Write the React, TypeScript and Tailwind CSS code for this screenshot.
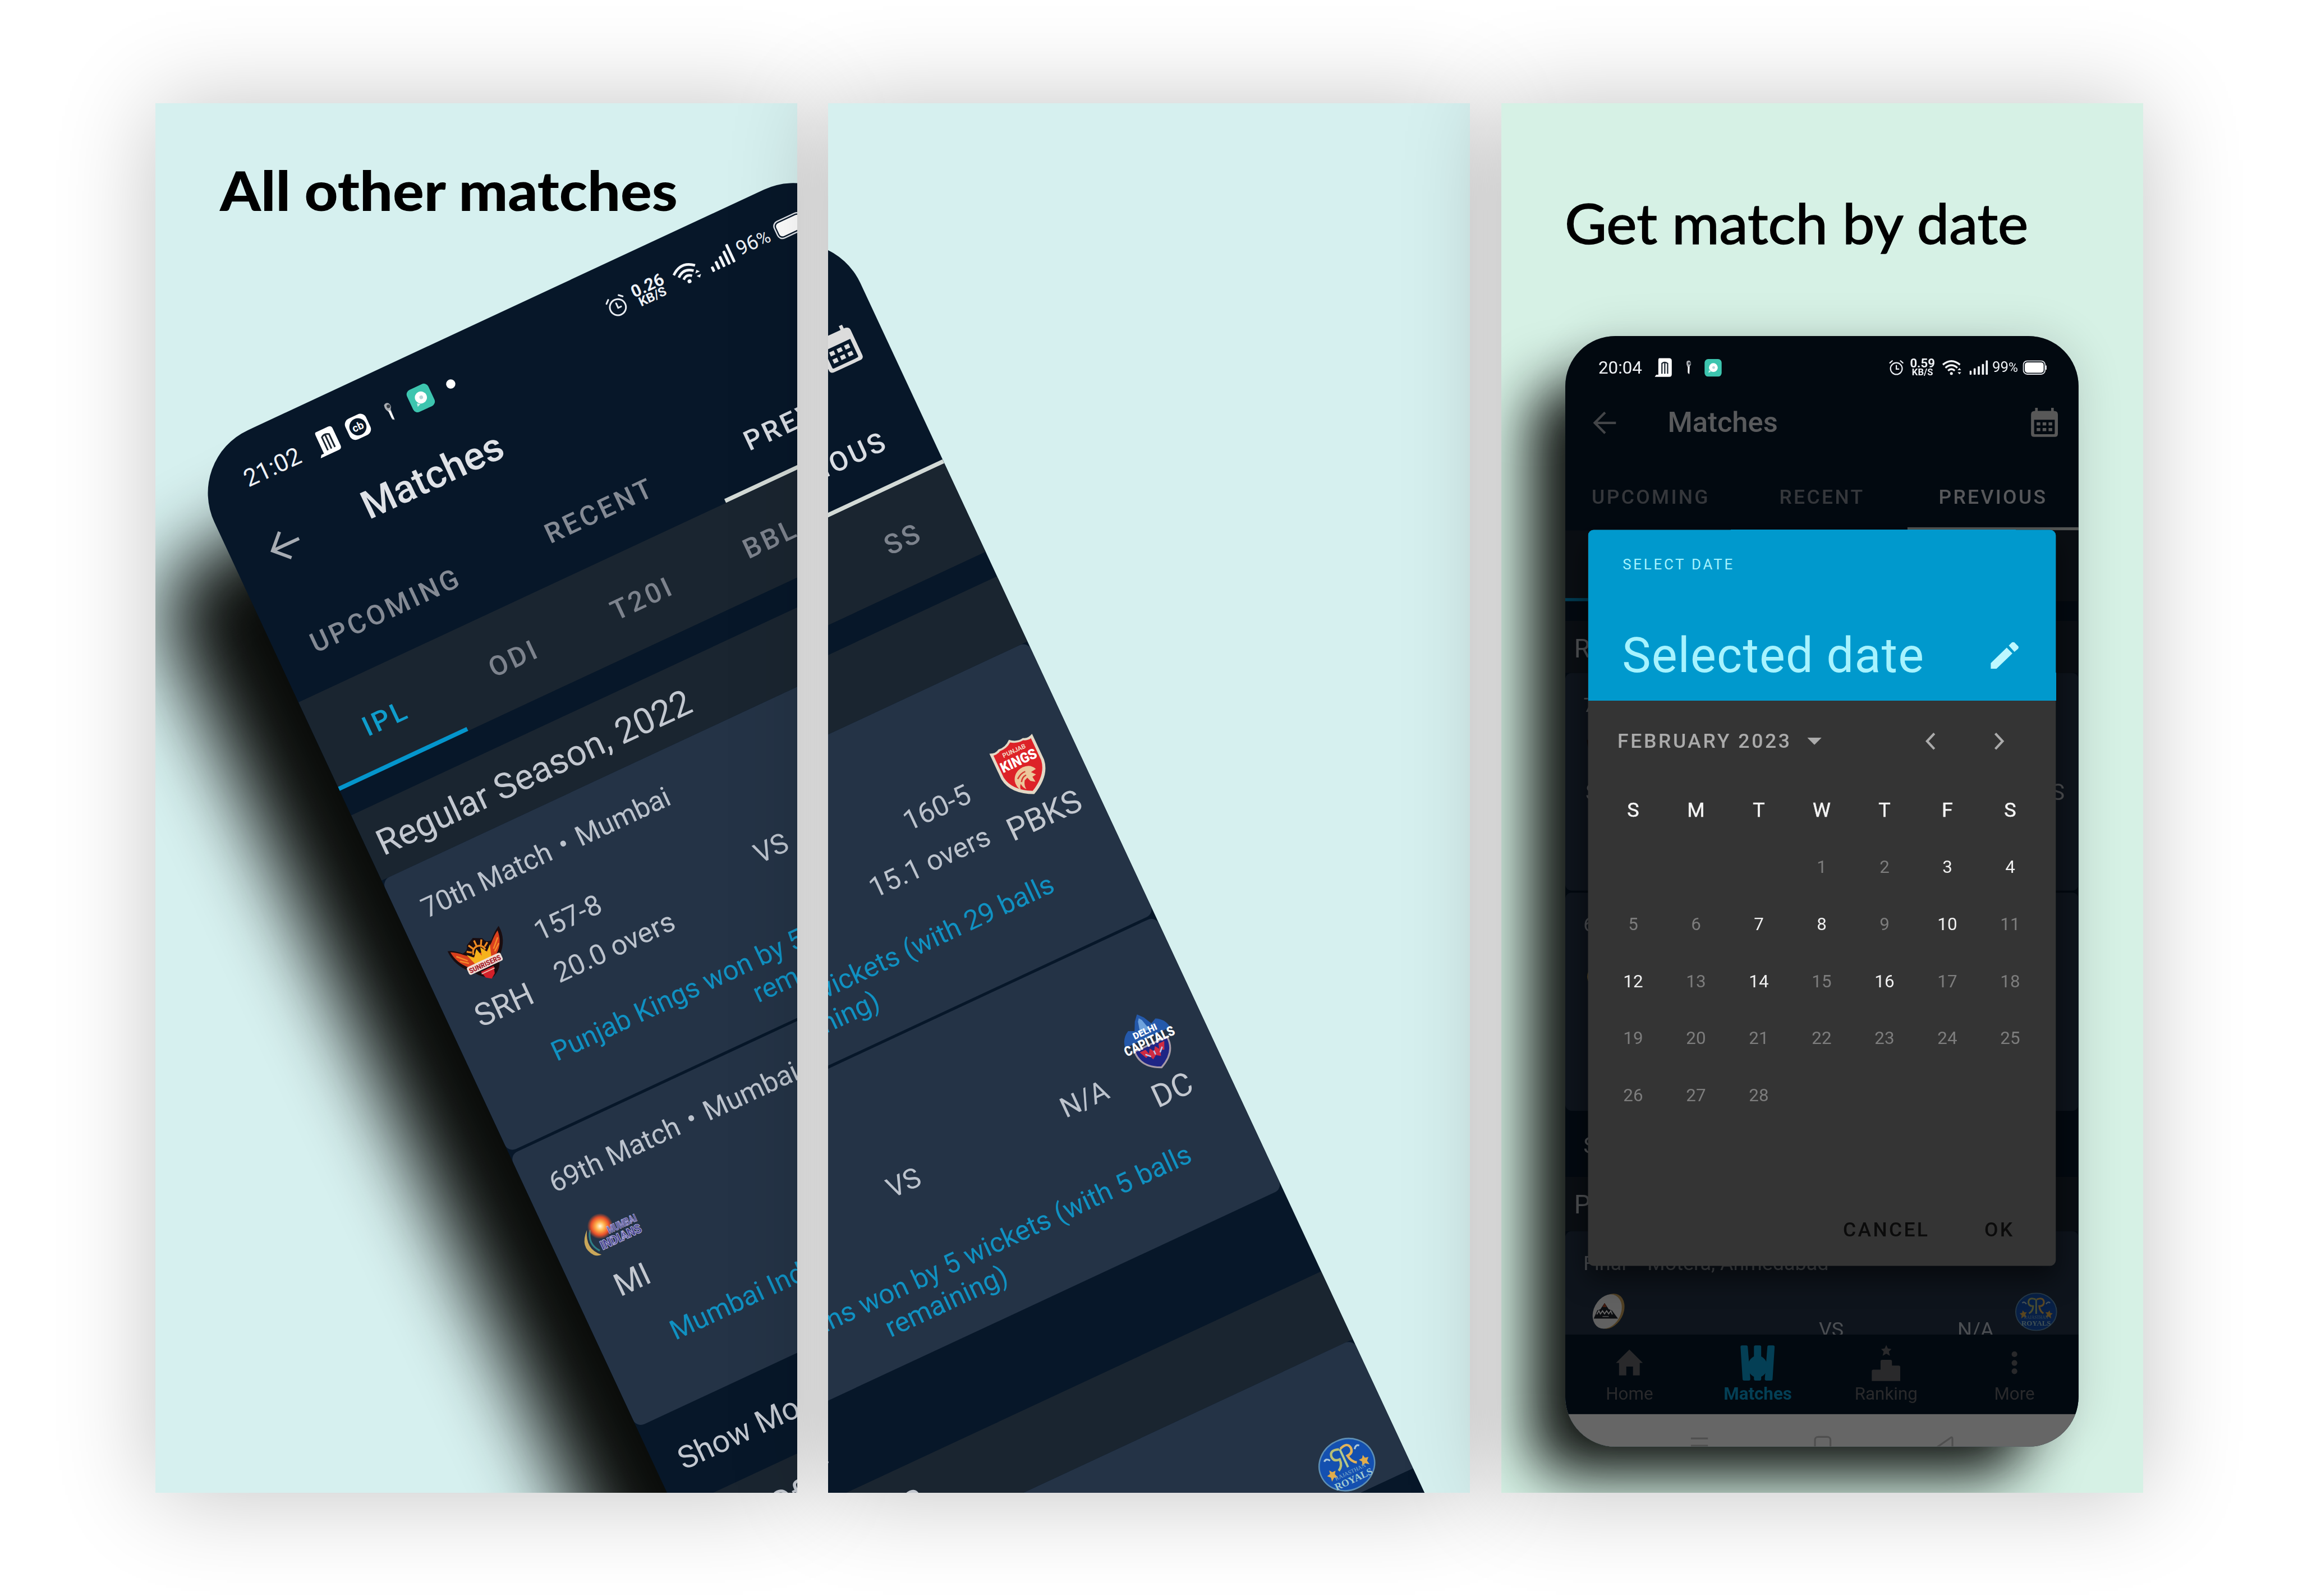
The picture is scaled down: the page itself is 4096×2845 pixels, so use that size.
import React from "react";

/* ---------- status bar glyphs ---------- */

function BuildingIcon() {
  return (
    <svg className="w-[34px] h-[38px] shrink-0" viewBox="0 0 34 38">
      <path d="M9 1h19q5 0 5 5v26q0 5-5 5H0l3-4h4V6q0-5 2-5z" fill="#fff" />
      <path d="M14 31V11q5-4 11 0v20M19.500 10v21" stroke="#1b2530" strokeWidth="2.4" fill="none" />
    </svg>
  );
}

function CbIcon() {
  return (
    <svg className="w-[36px] h-[36px] shrink-0" viewBox="0 0 36 36">
      <rect x="2" y="2" width="32" height="32" rx="9" fill="#fff" />
      <circle cx="18" cy="18" r="12" fill="#071729" />
      <text x="18" y="23" textAnchor="middle" fontSize="15" fontWeight="700" fill="#fff" fontFamily="Roboto">cb</text>
    </svg>
  );
}

function KeyIcon() {
  return (
    <svg className="w-[14px] h-[30px] shrink-0" viewBox="0 0 14 30">
      <path d="M3 3q4-3 7 0 3 5-1 9l-1 16-3-2 1-11Q1 10 3 3z" fill="#a9adb2" />
      <circle cx="8" cy="7" r="2.6" fill="#333a42" />
      <path d="M5 12l3 2v13l-3-3z" fill="#fff" />
    </svg>
  );
}

function GreenIcon() {
  return (
    <svg className="w-[34px] h-[35px] shrink-0" viewBox="0 0 34 35">
      <rect x="0.5" y="0.5" width="33" height="34" rx="7" fill="#3dc5af" />
      <circle cx="17.500" cy="17" r="8.500" fill="#fff" />
      <path d="M9 22l-1 5 5-2z" fill="#d5f2ec" />
      <circle cx="18" cy="17" r="2.600" fill="#b7d6d8" />
    </svg>
  );
}

function AlarmIcon() {
  return (
    <svg className="w-[29px] h-[31px] shrink-0" viewBox="0 0 29 31" fill="none" stroke="#e9edf2" strokeWidth="2.4" strokeLinecap="round">
      <circle cx="14.500" cy="17" r="11.300" />
      <path d="M2 6l4.500-4M27 6l-4.500-4M14.500 11v7h4.500" />
    </svg>
  );
}

function WifiIcon() {
  return (
    <svg className="w-[40px] h-[30px] shrink-0" viewBox="0 0 40 30" fill="none" stroke="#f2f5f8" strokeWidth="3.600">
      <path d="M1.500 9.500q16.500-14 33 0M6.500 15.500q11.500-10 23 0M11.500 21q6.500-6 13 0" />
      <circle cx="18" cy="26.500" r="2.800" fill="#f2f5f8" stroke="none" />
      <path d="M30 20l3.500-4 3.500 4zM30 24l3.500 4 3.500-4z" fill="#f2f5f8" stroke="none" />
    </svg>
  );
}

function SignalIcon() {
  return (
    <svg className="w-[36px] h-[28px] shrink-0" viewBox="0 0 36 28" fill="#f2f5f8">
      <rect x="0" y="20" width="4" height="8" rx="1.500" />
      <rect x="8" y="15.500" width="4" height="12.500" rx="1.500" />
      <rect x="16" y="11.500" width="4" height="16.500" rx="1.500" />
      <rect x="24" y="7" width="4" height="21" rx="1.500" />
      <rect x="31.500" y="0" width="4" height="28" rx="1.500" />
    </svg>
  );
}

function BatteryIcon() {
  return (
    <svg className="w-[47px] h-[28px] shrink-0" viewBox="0 0 47 28">
      <rect x="1.200" y="1.200" width="42" height="25.600" rx="7.500" fill="none" stroke="#dfe3e8" strokeWidth="2" />
      <rect x="4" y="4" width="36.500" height="20" rx="5" fill="#fff" />
      <path d="M45 10v8" stroke="#dfe3e8" strokeWidth="2.500" />
    </svg>
  );
}

function CalendarIcon() {
  return (
    <svg className="w-[52px] h-[57px] shrink-0" viewBox="0 0 52 57">
      <path
        fillRule="evenodd"
        fill="#dcdcdc"
        d="M8 0h5v6h26V0h5v6q8 0 8 7v37q0 6-6 6H6q-6 0-6-6V13q0-7 8-7zM6 23v26q0 2 2 2h36q2 0 2-2V23z"
      />
      <g fill="#dcdcdc">
        <rect x="11" y="28" width="7" height="6" />
        <rect x="22.500" y="28" width="7" height="6" />
        <rect x="34" y="28" width="7" height="6" />
        <rect x="11" y="39" width="7" height="6" />
        <rect x="22.500" y="39" width="7" height="6" />
        <rect x="34" y="39" width="7" height="6" />
      </g>
    </svg>
  );
}

function BackArrow() {
  return (
    <svg className="w-[46px] h-[44px] shrink-0" viewBox="0 0 46 44" fill="none" stroke="#a7acb3" strokeWidth="4.600">
      <path d="M45 22H4M24 2L4 22l20 20" />
    </svg>
  );
}

/* ---------- team crests ---------- */

function SrhLogo() {
  return (
    <svg className="w-[84px] h-[74px]" viewBox="0 0 84 74">
      <path d="M2 10Q10 12 20 22q8 0 10-8l12-6 12 6q2 8 10 8 10-10 18-14 2 22-16 38l-4 6q-2 12-18 18Q30 64 24 54l-6-6Q2 32 2 10z" fill="#1a0d10" />
      <path d="M5 13q8 4 16 12l10 8 10-2 11 2 11-8q8-8 15-12-1 18-15 29L42 54 20 44Q6 30 5 13z" fill="#d9401d" />
      <path d="M24 26l8 8 8-10 3 12 3-12 6 10 8-8-6 18H30z" fill="#f6b21c" />
      <path d="M33 30a9 9 0 0 1 18 0M42 12v8M32 15l4 7M52 15l-4 7M26 22l6 4M58 22l-6 4" stroke="#f08a20" strokeWidth="2.600" fill="none" />
      <path d="M10 22l12 12M74 22L62 34M12 30l10 8M72 30l-10 8" stroke="#f58a2a" strokeWidth="2" />
      <path d="M32 56h20l-3 10-7 5-7-5z" fill="#d3202a" />
      <rect x="16" y="42" width="52" height="12" rx="3" fill="#f1ddd4" />
      <text x="42" y="52" textAnchor="middle" fontSize="10" fontWeight="900" fill="#a5202a" fontFamily="Roboto" textLength="48" lengthAdjust="spacingAndGlyphs">SUNRISERS</text>
      <path d="M32 59h20" stroke="#f0b9a8" strokeWidth="1.500" />
    </svg>
  );
}

function PbksLogo() {
  return (
    <svg className="w-[74px] h-[88px]" viewBox="0 0 74 88">
      <path d="M4 8q8 4 14 0 10 2 19-6 9 8 19 6 6 4 14 0v40q-3 24-33 38Q7 72 4 48z" fill="#e3d9c6" />
      <path d="M8 13q6 1 11-2 10 1 18-5 8 6 18 5 5 3 11 2v34q-3 21-29 34Q11 68 8 47z" fill="#dd2228" />
      <text x="37" y="22" textAnchor="middle" fontSize="9" fontWeight="700" fill="#f3d7c4" fontFamily="Roboto">PUNJAB</text>
      <text x="37" y="41" textAnchor="middle" fontSize="20" fontWeight="900" fill="#fff" fontFamily="Roboto" textLength="54" lengthAdjust="spacingAndGlyphs">KINGS</text>
      <path d="M20 58q4-12 18-13 12 0 16 10l-8 1 5 6-6 1 1 8-6-4-2-6-5 2q-4 6-3 12-4-4-4-10-4 4-3 9-5-8-3-16z" fill="#ecc79b" />
      <path d="M25 57q8-6 14-5M28 63q4-6 10-6" stroke="#d63b30" strokeWidth="2" fill="none" />
    </svg>
  );
}

function MiLogo() {
  return (
    <svg className="w-[88px] h-[62px]" viewBox="0 0 88 62">
      <defs>
        <radialGradient id="sun">
          <stop offset="0" stopColor="#fffbe0" />
          <stop offset="0.35" stopColor="#ffb14a" />
          <stop offset="0.7" stopColor="#e8502a" />
          <stop offset="1" stopColor="#e8502a" stopOpacity="0" />
        </radialGradient>
      </defs>
      <path d="M16 16Q-4 34 10 52q4 4 10 4Q2 40 16 16z" fill="#c9a75a" />
      <path d="M20 18Q8 34 20 50" stroke="#2f7f86" strokeWidth="2.500" fill="none" />
      <circle cx="35" cy="19" r="18" fill="url(#sun)" />
      <text x="42" y="34" fontSize="15" fontWeight="900" fill="#4e4c93" stroke="#aaa6d6" strokeWidth="0.800" fontFamily="Roboto" textLength="44" lengthAdjust="spacingAndGlyphs">MUMBAI</text>
      <text x="24" y="51" fontSize="18" fontWeight="900" fill="#3f3d88" stroke="#aaa6d6" strokeWidth="1" fontFamily="Roboto" textLength="62" lengthAdjust="spacingAndGlyphs">INDIANS</text>
    </svg>
  );
}

function DcLogo() {
  return (
    <svg className="w-[78px] h-[84px]" viewBox="0 0 78 84">
      <path d="M4 36q2-14 14-20l8 4 6-12 7-8 7 8 6 12 8-4q12 6 14 20z" fill="#2459ab" />
      <path d="M32 26l4-16 3-4 3 4 4 16z" fill="#6fa3dd" />
      <path d="M14 46h50q2 24-25 36Q12 70 14 46z" fill="#1f2585" stroke="#a79aa6" strokeWidth="2.500" />
      <path d="M20 50h9l2 7 4-6 4 6 4-6 4 6 2-7h9l-5 11-5-2-3 8-6-4-6 4-3-8-5 2z" fill="#cf2b42" />
      <path d="M26 56l6 6M52 56l-6 6M39 56v6" stroke="#b8c6ec" strokeWidth="2" />
      <text x="39" y="31" textAnchor="middle" fontSize="13" fontWeight="900" fill="#fff" fontFamily="Roboto">DELHI</text>
      <text x="39" y="48" textAnchor="middle" fontSize="19" fontWeight="900" fill="#fff" fontFamily="Roboto" textLength="76" lengthAdjust="spacingAndGlyphs">CAPITALS</text>
    </svg>
  );
}

function GtLogo() {
  return (
    <svg className="w-[70px] h-[74px]" viewBox="0 0 70 74">
      <g transform="rotate(28 35 37)">
        <ellipse cx="38" cy="34" rx="26" ry="36" fill="#c9a05a" />
        <ellipse cx="34" cy="37" rx="26" ry="35" fill="#f2f2f2" />
      </g>
      <path d="M8 50l7-16 6-2 8-12 8 12 6 2 12 16z" fill="#20232c" />
      <path d="M29 20l-4 8h8z" fill="#b04a28" />
      <path d="M14 42l4-7 3 6 4-6 4 6 4-6 4 6 4-6 3 7" stroke="#fff" strokeWidth="2" fill="none" />
      <path d="M25 46h12" stroke="#c8c8c8" strokeWidth="1.500" />
    </svg>
  );
}

function RrLogo() {
  return (
    <svg className="w-[82px] h-[74px]" viewBox="0 0 82 74" fontFamily="Liberation Serif">
      <ellipse cx="41" cy="37" rx="39.500" ry="36" fill="#1450b0" stroke="#5e8fb4" strokeWidth="2" />
      <path d="M40 13q-13-5-14 5 0 8 9 8 0 10-8 14" stroke="#b9bf74" strokeWidth="3.400" fill="none" />
      <path d="M42 13q13-5 14 5 0 8-9 8 1 10 8 14" stroke="#e2b25a" strokeWidth="3.400" fill="none" />
      <path d="M41 13v28" stroke="#b3c98d" strokeWidth="3" />
      <path d="M15 34l3 4 5 0-3 4 2 6-5-2-5 4 1-6-4-4 5-1zM67 34l-3 4-5 0 3 4-2 6 5-2 5 4-1-6 4-4-5-1z" fill="#e0ac4b" />
      <path d="M14 20q4-4 8 2M68 20q-4-4-8 2" stroke="#a9c6da" strokeWidth="2.500" fill="none" />
      <text x="41" y="51" textAnchor="middle" fontSize="8" fill="#86b4cf">RAJASTHAN</text>
      <text x="41" y="64" textAnchor="middle" fontSize="14" fontWeight="700" fill="#a3cbd1">ROYALS</text>
    </svg>
  );
}

/* ---------- app screen ---------- */

type StatusProps = { time: string; speed: string; battery: string; extended?: boolean };

function StatusBar({ time, speed, battery, extended }: StatusProps) {
  return (
    <div className="relative z-10 flex h-[122px] shrink-0 items-center justify-between pl-[64px] pr-[61px] text-[#eef1f5]">
      <div className="flex items-center">
        <span className="w-[109px] text-[34px] leading-none">{time}</span>
        <BuildingIcon />
        {extended && (
          <span className="ml-[14px] flex">
            <CbIcon />
          </span>
        )}
        <span className="ml-[25px] mr-[23px] flex">
          <KeyIcon />
        </span>
        <GreenIcon />
        {extended && <span className="ml-[23px] h-[13px] w-[13px] rounded-full bg-white" />}
      </div>
      <div className="flex items-center">
        <AlarmIcon />
        <div className="ml-[11px] flex w-[50px] flex-col items-center font-bold">
          <span className="text-[24px] leading-[17px]">{speed}</span>
          <span className="text-[18px] leading-[16px]">KB/S</span>
        </div>
        <span className="ml-[13px] flex">
          <WifiIcon />
        </span>
        <span className="ml-[13px] flex">
          <SignalIcon />
        </span>
        <span className="ml-[8px] w-[57px] text-[28px] leading-none">
          {battery}
          <span className="text-[25px]">%</span>
        </span>
        <span className="ml-[2px] flex">
          <BatteryIcon />
        </span>
      </div>
    </div>
  );
}

function SeasonHeader({ title, className }: { title: string; className: string }) {
  return (
    <div className={"flex shrink-0 items-center bg-[#1a2530] pl-[17px] text-[50px] leading-none text-[#c3c8d0] " + className}>
      {title}
    </div>
  );
}

type Team = { code?: string; logo: React.ReactNode; score: string[] };

function TeamColumn({ team }: { team: Team }) {
  return (
    <div className="flex w-[164px] shrink-0 flex-col items-center pt-[35px]">
      <div className="flex h-[74px] items-center justify-center">{team.logo}</div>
      {team.code && <div className="mt-[16px] text-[44.5px] leading-[44px] text-[#c3c8d0]">{team.code}</div>}
    </div>
  );
}

function Score({ lines, right }: { lines: string[]; right?: boolean }) {
  return (
    <div className={"mt-[41px] flex h-[130px] flex-1 flex-col justify-center " + (right ? "items-end" : "items-start pl-[1px]")}>
      {lines.map((l) => (
        <span key={l} className="leading-[65px] text-[39.5px]">
          {l}
        </span>
      ))}
    </div>
  );
}

type MatchProps = {
  title: [string, string];
  home: Team;
  away: Team;
  result?: [string, string];
  className: string;
};

function MatchCard({ title, home, away, result, className }: MatchProps) {
  return (
    <div className={"shrink-0 overflow-hidden rounded-[12px] bg-[#243346] text-[39px] text-[#bcc3cd] " + className}>
      <div className="mt-[40px] h-[44px] whitespace-pre pl-[35px] leading-[44px]">
        {title[0]}
        <span className="mx-[4px]"> • </span>
        {title[1]}
      </div>
      <div className="flex h-[214px]">
        <TeamColumn team={home} />
        <Score lines={home.score} />
        <span className="ml-[35px] mt-[41px] leading-[130px]">VS</span>
        <Score lines={away.score} right />
        <TeamColumn team={away} />
      </div>
      {result && (
        <div className="pl-[4px] text-center text-[38.6px] leading-[45px] text-[#1091c2]">
          {result[0]}
          <br />
          {result[1]}
        </div>
      )}
    </div>
  );
}

const matches: Record<string, Omit<MatchProps, "className">> = {
  m70: {
    title: ["70th Match", "Mumbai"],
    home: { code: "SRH", logo: <SrhLogo />, score: ["157-8", "20.0 overs"] },
    away: { code: "PBKS", logo: <PbksLogo />, score: ["160-5", "15.1 overs"] },
    result: ["Punjab Kings won by 5 wickets (with 29 balls", "remaining)"],
  },
  m69: {
    title: ["69th Match", "Mumbai"],
    home: { code: "MI", logo: <MiLogo />, score: [] },
    away: { code: "DC", logo: <DcLogo />, score: ["N/A"] },
    result: ["Mumbai Indians won by 5 wickets (with 5 balls", "remaining)"],
  },
  final: {
    title: ["Final", "Motera, Ahmedabad"],
    home: { logo: <GtLogo />, score: [] },
    away: { logo: <RrLogo />, score: ["N/A"] },
  },
};

function NavItem({ label, active, children }: { label: string; active?: boolean; children: React.ReactNode }) {
  return (
    <div className={"flex flex-1 flex-col items-center pt-[18px] " + (active ? "font-bold text-[#0a9fd4]" : "text-[#66686c]")}>
      <svg className="h-[74px] w-[74px]" viewBox="0 0 74 74" fill="currentColor">
        {children}
      </svg>
      <span className="mt-[2px] text-[34px] leading-[40px]">{label}</span>
    </div>
  );
}

function BottomNav() {
  return (
    <div className="flex h-[154px] shrink-0 bg-[#071729]">
      <NavItem label="Home">
        <path d="M37 11l26 26h-6v24H44V44H31v17H17V37h-6z" />
      </NavItem>
      <NavItem label="Matches" active>
        <path d="M4 6q0-3 3-3h8q3 0 3 3l5 62q0 3-3 3h-9q-3 0-3-3zM70 6q0-3-3-3h-8q-3 0-3 3l-5 62q0 3 3 3h9q3 0 3-3z" />
        <rect x="30" y="3" width="14" height="68" rx="3" />
        <ellipse cx="37" cy="44" rx="19" ry="21" />
      </NavItem>
      <NavItem label="Ranking">
        <path d="M37 2l3 7 7 1-5 5 2 8-7-4-7 4 2-8-5-5 7-1zM9 53q0-3 3-3h14V34q0-3 3-3h16q3 0 3 3v8h13q3 0 3 3v27H9z" />
      </NavItem>
      <NavItem label="More">
        <circle cx="37" cy="20" r="5.500" />
        <circle cx="37" cy="37" r="5.500" />
        <circle cx="37" cy="53" r="5.500" />
      </NavItem>
    </div>
  );
}

function SystemBar() {
  return (
    <div className="h-[63px] shrink-0 overflow-hidden bg-white">
      <svg className="h-[63px] w-[993px]" viewBox="0 0 993 63" fill="none" stroke="#c6c6c6" strokeWidth="3.500">
        <path d="M243 47h33M243 61h33" />
        <rect x="483" y="44" width="30" height="32" rx="6" />
        <path d="M749 70V48q0-5-4-2l-26 18q-3 3 0 5l26 18" />
      </svg>
    </div>
  );
}

const leagues = ["IPL", "ODI", "T20I", "BBL", "SS"];

function PhoneScreen({ status, children }: { status: StatusProps; children?: React.ReactNode }) {
  return (
    <div className="relative flex h-[2149px] w-[993px] flex-col overflow-hidden rounded-[97px] bg-[#071729]">
      <div className="flex h-[1932px] shrink-0 flex-col overflow-hidden">
        <StatusBar {...status} />
        <div className="flex h-[122px] shrink-0 items-center pb-[31px] pl-[53px] pr-[40px]">
          <BackArrow />
          <span className="ml-[99px] flex-1 text-[55px] font-medium leading-none text-[#dfe2e7]">Matches</span>
          <CalendarIcon />
        </div>
        <div className="flex h-[132px] shrink-0 text-[38.6px] font-medium leading-[133px] tracking-[3.6px]">
          <span className="flex-1 text-center text-[#848a94]">UPCOMING</span>
          <span className="flex-1 text-center text-[#848a94]">RECENT</span>
          <span className="box-border flex-1 border-b-[6px] border-[#d3dad6] text-center text-[#d9dde3]">PREVIOUS</span>
        </div>
        <div className="flex h-[137px] shrink-0 bg-[#1a2530] text-[38.6px] font-medium leading-[144px] tracking-[3.6px]">
          {leagues.map((l, i) => (
            <span
              key={l}
              className={
                i === 0
                  ? "flex-1 border-b-[6px] border-[#0495cc] pl-[4px] text-center text-[#0f9dcc]"
                  : "flex-1 pl-[4px] text-center text-[#7d838d]"
              }
            >
              {l}
            </span>
          ))}
        </div>
        <SeasonHeader title="Regular Season, 2022" className="mt-[38px] h-[101px] pt-[6px]" />
        <MatchCard {...matches.m70} className="h-[421px]" />
        <MatchCard {...matches.m69} className="mt-[4px] h-[422px]" />
        <div className="flex h-[128px] shrink-0 items-center pl-[35px] pt-[5px] text-[44px] leading-none text-[#c3c8d0]">Show More</div>
        <SeasonHeader title="Play Offs, 2022" className="h-[105px] pt-[3px]" />
        <MatchCard {...matches.final} className="h-[422px]" />
      </div>
      <BottomNav />
      <SystemBar />
      {children}
    </div>
  );
}

/* ---------- date picker ---------- */

const enabledDays = new Set([3, 4, 7, 8, 10, 12, 14, 16]);
const weekdays = ["S", "M", "T", "W", "T", "F", "S"];
const cells: (number | null)[] = [null, null, null, ...Array.from({ length: 28 }, (_, i) => i + 1)];

function DatePicker() {
  return (
    <div className="absolute left-[44px] top-[375px] z-10 flex h-[1424px] w-[905px] flex-col overflow-hidden rounded-[11px] bg-[#343434] shadow-[0_24px_50px_rgba(0,0,0,0.5)]">
      <div className="flex h-[331px] shrink-0 flex-col bg-[#0099cd] text-[#a6f3ff]">
        <span className="mt-[53px] pl-[67px] text-[28px] leading-[30px] tracking-[4.1px]">SELECT DATE</span>
        <div className="mt-[104px] flex items-center justify-between pl-[66px] pr-[72px]">
          <span className="text-[93.8px] leading-[112px] tracking-[1.3px]">Selected date</span>
          <svg className="h-[52px] w-[54px]" viewBox="0 0 54 52" fill="#bdf8ff">
            <path d="M0 41L31 11l11 11L11 52H0zM35 7l6-6q2-2 5 0l7 7q2 2 0 5l-7 6z" />
          </svg>
        </div>
      </div>
      <div className="flex h-[156px] shrink-0 items-center pl-[57px] text-[#ababab]">
        <span className="text-[38.6px] font-medium leading-none tracking-[3.9px]">FEBRUARY 2023</span>
        <svg className="ml-[30px] h-[14px] w-[28px]" viewBox="0 0 28 14" fill="currentColor">
          <path d="M0 0h28L14 14z" />
        </svg>
        <svg className="ml-auto h-[34px] w-[20px]" viewBox="0 0 20 34" fill="none" stroke="currentColor" strokeWidth="4.600">
          <path d="M18 2L4 17l14 15" />
        </svg>
        <svg className="ml-[114px] mr-[99px] h-[34px] w-[20px]" viewBox="0 0 20 34" fill="none" stroke="currentColor" strokeWidth="4.600">
          <path d="M2 2l14 15L2 32" />
        </svg>
      </div>
      <div className="ml-[26.5px] grid w-[851px] shrink-0 grid-cols-7 text-center">
        {weekdays.map((d, i) => (
          <span key={i} className="h-[110.35px] text-[39px] leading-[110.35px] text-[#f4f4f4] [-webkit-text-stroke:0.6px_#f4f4f4]">
            {d}
          </span>
        ))}
        {cells.map((d, i) => (
          <span
            key={i}
            className={
              d && enabledDays.has(d)
                ? "h-[110.35px] text-[34px] leading-[110.35px] text-[#f0f0f0]"
                : "h-[110.35px] text-[34px] leading-[110.35px] text-[#7d7d7d]"
            }
          >
            {d}
          </span>
        ))}
      </div>
      <div className="mt-auto flex h-[140px] items-center justify-end gap-[106px] pr-[80px] text-[38.6px] font-medium leading-none tracking-[3.6px] text-[#0b0b0b]">
        <span>CANCEL</span>
        <span>OK</span>
      </div>
    </div>
  );
}

/* ---------- showcase ---------- */

const panel = "relative h-[2477px] w-[1144px] shrink-0 overflow-hidden";
const panelShadow = "relative shrink-0 shadow-[0_4px_164px_rgba(0,0,0,0.24)]";
const tilted: StatusProps = { time: "21:02", speed: "0.26", battery: "96", extended: true };

export default function App() {
  return (
    <div className="flex h-[2845px] w-[4096px] items-start gap-[55.5px] overflow-hidden bg-white pl-[276.5px] pt-[183.5px] font-['Roboto',sans-serif]">
      <div className={panelShadow}>
        <section className={panel + " bg-[#d6f0ef]"}>
          <div className="absolute left-[53px] top-[635px] origin-top-left -rotate-[25deg] scale-[1.2705]">
            <div className="absolute left-[-125px] top-[130px] h-[2109px] w-[953px] rounded-[90px] bg-[#0a0c0a] blur-[54px]" />
            <PhoneScreen status={tilted} />
          </div>
          <h1 className="relative ml-[115px] mt-[105px] w-max origin-left scale-x-[1.062] whitespace-nowrap font-['Lato',sans-serif] text-[98px] font-black leading-none text-black">
            All other matches
          </h1>
        </section>
      </div>
      <div className={panelShadow}>
        <section className={panel + " bg-[#d6f0ef]"}>
          <div className="absolute left-[-1138px] top-[742px] origin-top-left -rotate-[25deg] scale-[1.2705]">
            <PhoneScreen status={tilted} />
          </div>
        </section>
      </div>
      <div className={panelShadow}>
        <section className={panel + " bg-[#d6f1e5]"}>
          <div className="absolute left-[114px] top-[415.5px] origin-top-left scale-[0.9213]">
            <div className="rounded-[97px] shadow-[-87px_75px_112px_-20px_rgba(10,12,10,0.97),0_0_90px_rgba(0,0,0,0.14)]">
              <PhoneScreen status={{ time: "20:04", speed: "0.59", battery: "99" }}>
                <div className="absolute inset-0 bg-black/60" />
                <DatePicker />
              </PhoneScreen>
            </div>
          </div>
          <h1 className="relative ml-[113px] mt-[164px] w-max origin-left scale-x-[1.047] whitespace-nowrap font-['Lato',sans-serif] text-[98px] font-normal leading-none text-black [-webkit-text-stroke:1.6px_black]">
            Get match by date
          </h1>
        </section>
      </div>
    </div>
  );
}
